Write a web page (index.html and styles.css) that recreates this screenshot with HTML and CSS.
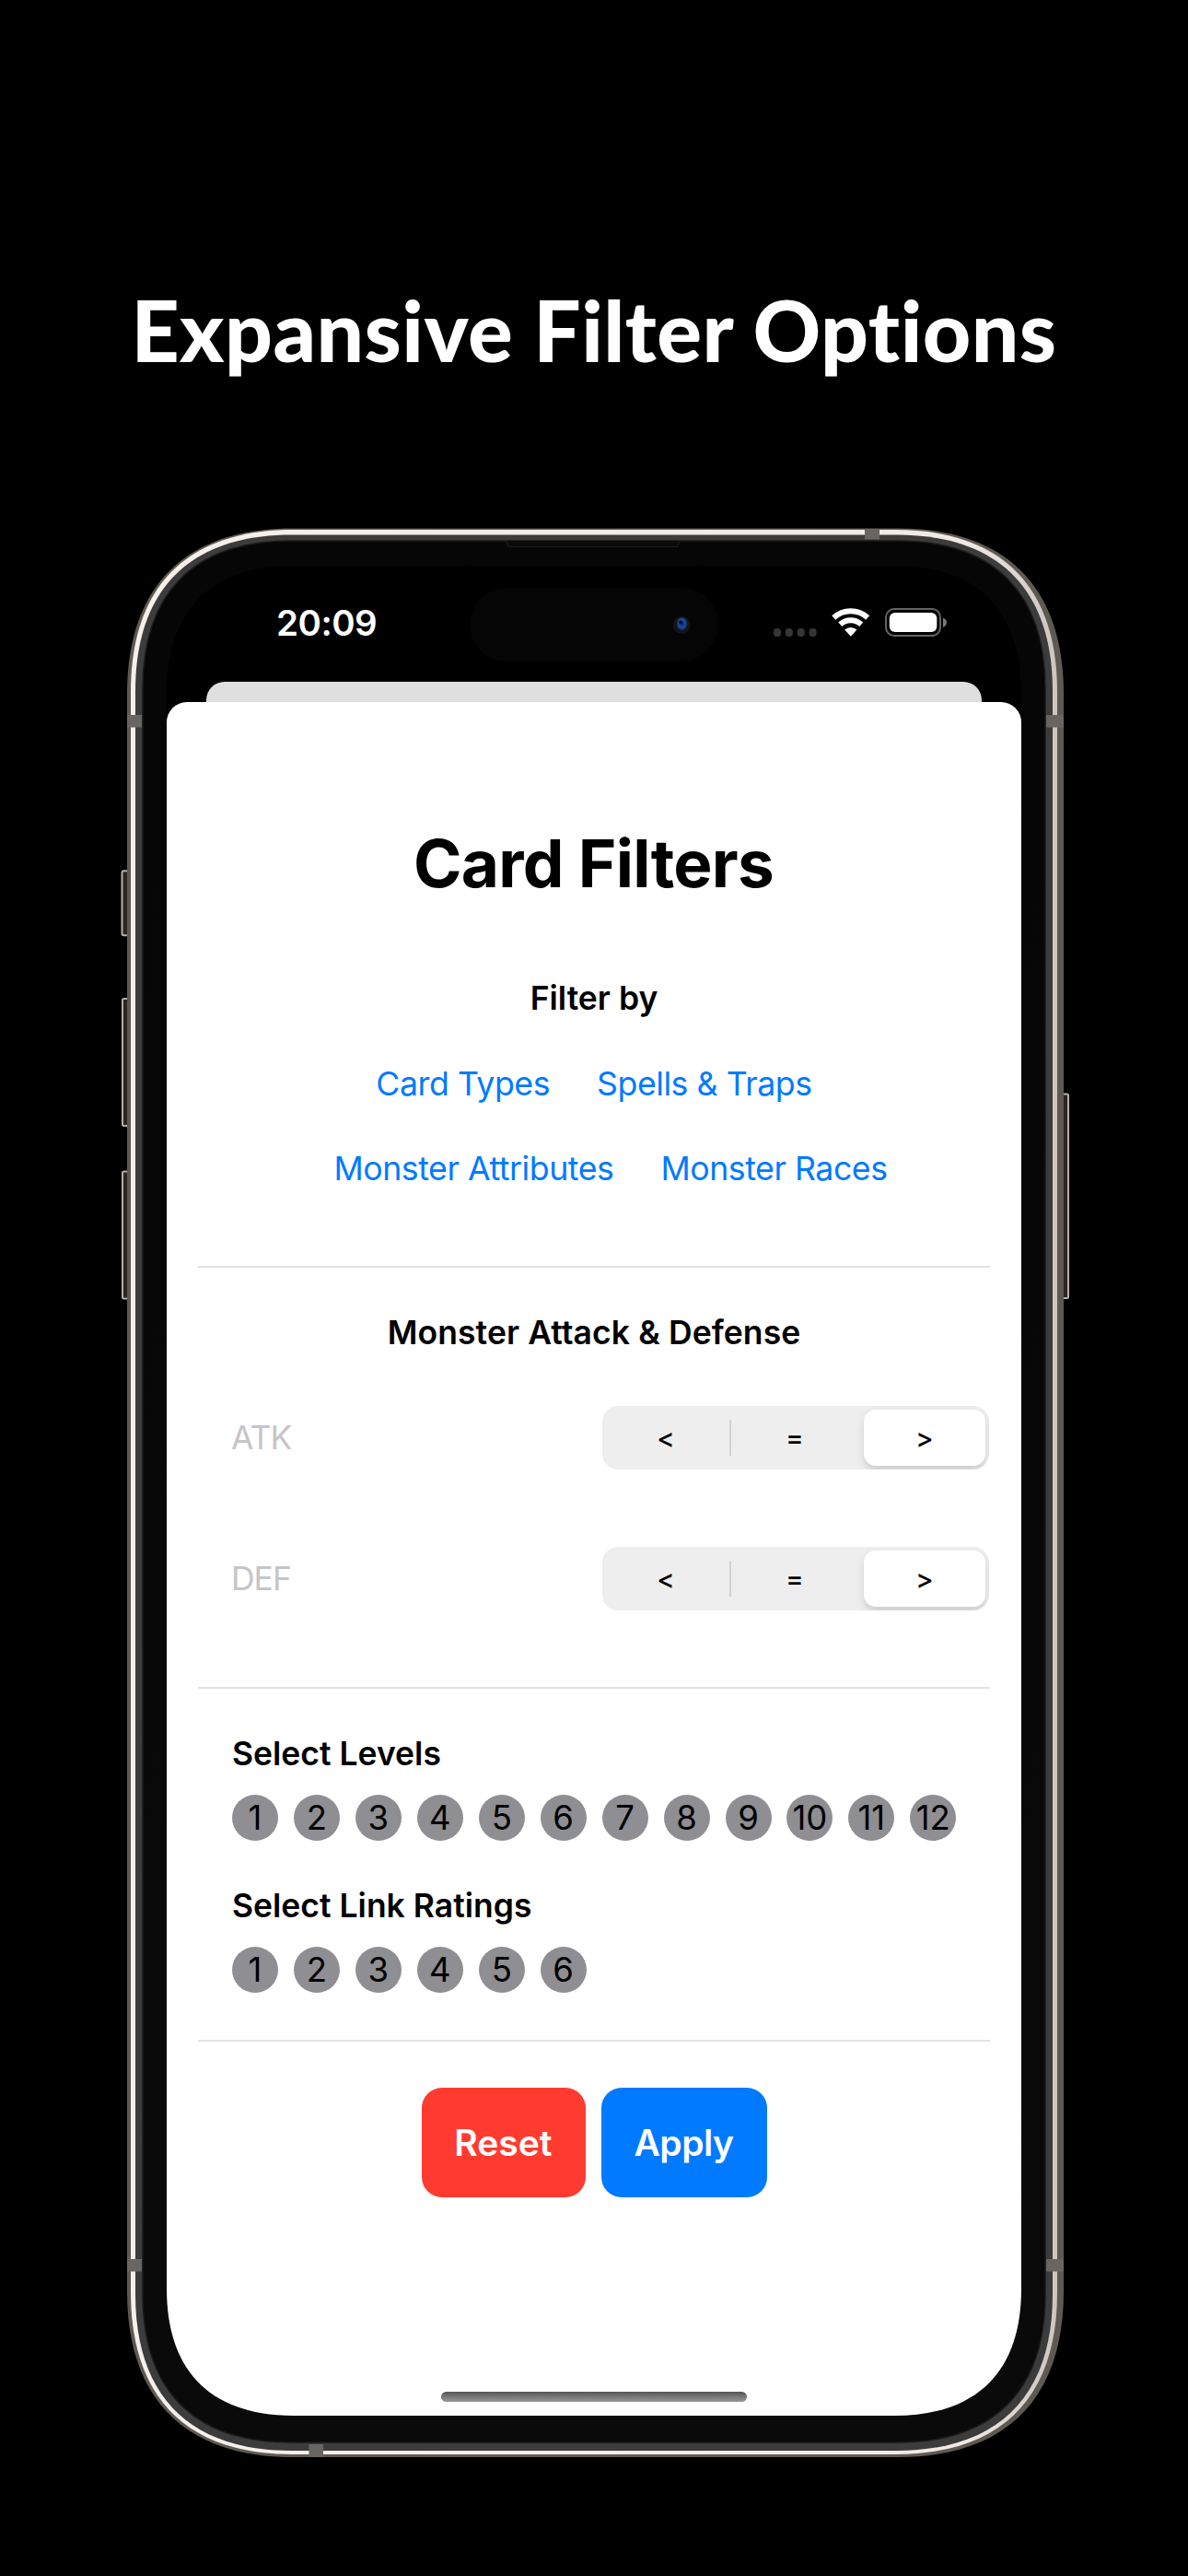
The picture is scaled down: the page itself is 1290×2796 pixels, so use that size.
FILE: index.html
```html
<!DOCTYPE html>
<html lang="en">
<head>
<meta charset="utf-8">
<title>Expansive Filter Options</title>
<link rel="stylesheet" href="styles.css">
</head>
<body>
<main class="page">
  <h1 class="headline">Expansive Filter Options</h1>
  <div class="device">
    <svg class="frame" viewBox="131 573 1031 2095" aria-hidden="true">
      <defs>
        <linearGradient id="shine" x1="0" x2="1" y1="0" y2="0">
          <stop offset="0" stop-color="#f6efeb"/>
          <stop offset=".9" stop-color="#f0e9e5"/>
          <stop offset="1" stop-color="#cdc5c0"/>
        </linearGradient>
        <linearGradient id="glass" x1="0" x2="0" y1="0" y2="1">
          <stop offset="0" stop-color="#060606"/>
          <stop offset="1" stop-color="#0a0a0a"/>
        </linearGradient>
      </defs>
      <g fill="#2c2523" stroke="#b5aea9" stroke-width="2">
        <rect x="132.500" y="945.300" width="10" height="70" rx="2"/>
        <rect x="133" y="1084" width="10" height="138" rx="1.500"/>
        <rect x="133" y="1271.500" width="10" height="138" rx="1.500"/>
        <rect x="1150" y="1187.500" width="10" height="221.500" rx="1.500"/>
      </g>
      <path fill="#5e5a52" d="M318 573.5H975c117 0 180 63 180 180V2487c0 117-63 180-180 180H318c-117 0-180-63-180-180V753.500c0-117 63-180 180-180z"/>
      <path fill="url(#shine)" d="M318 575H972c115 0 176 61 176 176V2488c0 115-61 176-176 176H318c-115 0-176-61-176-176V751c0-115 61-176 176-176z"/>
      <path fill="#3c3c3c" d="M317 580.5H973c111 0 170 59 170 170V2490c0 111-59 170-170 170H317c-111 0-170-59-170-170V750.500c0-111 59-170 170-170z"/>
      <path fill="url(#glass)" stroke="#1a1a1a" stroke-width="1.500" d="M316 587H974c105 0 161 56 161 161V2490c0 105-56 161-161 161H316c-105 0-161-56-161-161V748c0-105 56-161 161-161z"/>
      <g fill="#686562">
        <rect x="138" y="776" width="16" height="13.500"/>
        <rect x="1136" y="776" width="19" height="13.500"/>
        <rect x="138" y="2452" width="16" height="13.500"/>
        <rect x="1136" y="2452" width="19" height="13.500"/>
        <rect x="939" y="574" width="16" height="11.500"/>
        <rect x="335.500" y="2653" width="15.500" height="14"/>
      </g>
      <path fill="#0a0a0a" stroke="#1e1e1e" d="M549.5 587l2.500 6.500H735.500l2.500-6.500"/>
    </svg>
    <div class="screen">
      <div class="status">
        <span class="time">20:09</span>
        <div class="island">
          <svg class="camera" viewBox="0 0 20 20" aria-hidden="true">
            <defs>
              <radialGradient id="lens" cx=".5" cy=".45" r=".55">
                <stop offset="0" stop-color="#1a1550"/>
                <stop offset=".3" stop-color="#1d3a86"/>
                <stop offset=".6" stop-color="#1a4a9c"/>
                <stop offset="1" stop-color="#0b1228"/>
              </radialGradient>
            </defs>
            <circle cx="10" cy="10.500" r="9.500" fill="#141414"/>
            <ellipse cx="10.500" cy="9.500" rx="6" ry="7.500" fill="url(#lens)"/>
            <ellipse cx="9" cy="7.500" rx="1.800" ry="2" fill="#0a0a2c"/>
          </svg>
        </div>
        <svg class="icons" viewBox="838 663 192 34" aria-hidden="true">
          <g fill="#363636">
            <rect x="840" y="686" width="8" height="9" rx="3.500"/>
            <rect x="852.800" y="686" width="8" height="9" rx="3.500"/>
            <rect x="865.700" y="686" width="8" height="9" rx="3.500"/>
            <rect x="878.600" y="686" width="8" height="9" rx="3.500"/>
          </g>
          <g fill="none" stroke="#fff" stroke-width="6">
            <path d="M905.300 674.500a27 27 0 0 1 36.900 0"/>
            <path d="M912.300 681.800a17 17 0 0 1 22.900 0"/>
          </g>
          <path fill="#fff" d="M923.800 694.800l-6.600-7.200a9.500 9.500 0 0 1 13.200 0z"/>
          <rect x="962" y="665" width="59" height="29" rx="9" fill="none" stroke="#646464" stroke-width="2"/>
          <rect x="965.800" y="669" width="51.500" height="21" rx="6" fill="#fff"/>
          <path fill="#777" d="M1024 674.500c2.600 1 4 3 4 5.200s-1.400 4.200-4 5.200z"/>
        </svg>
      </div>
      <div class="backsheet"></div>
      <section class="sheet">
        <h2 class="title">Card Filters</h2>
        <h3 class="heading">Filter by</h3>
        <nav class="links"><a>Card Types</a><a>Spells &amp; Traps</a></nav>
        <nav class="links links-wide"><a>Monster Attributes</a><a>Monster Races</a></nav>
        <hr class="rule">
        <h3 class="heading heading-stats">Monster Attack &amp; Defense</h3>
        <div class="stat">
          <span class="field">ATK</span>
          <div class="segments"><span class="seg">&lt;</span><span class="seg seg-mid">=</span><span class="seg seg-on">&gt;</span></div>
        </div>
        <div class="stat">
          <span class="field">DEF</span>
          <div class="segments"><span class="seg">&lt;</span><span class="seg seg-mid">=</span><span class="seg seg-on">&gt;</span></div>
        </div>
        <hr class="rule rule-stats">
        <h3 class="label">Select Levels</h3>
        <div class="dots"><span class="dot">1</span><span class="dot">2</span><span class="dot">3</span><span class="dot">4</span><span class="dot">5</span><span class="dot">6</span><span class="dot">7</span><span class="dot">8</span><span class="dot">9</span><span class="dot">10</span><span class="dot">11</span><span class="dot">12</span></div>
        <h3 class="label">Select Link Ratings</h3>
        <div class="dots"><span class="dot">1</span><span class="dot">2</span><span class="dot">3</span><span class="dot">4</span><span class="dot">5</span><span class="dot">6</span></div>
        <hr class="rule">
        <div class="actions"><span class="btn btn-reset">Reset</span><span class="btn btn-apply">Apply</span></div>
        <div class="home"></div>
      </section>
    </div>
  </div>
</main>
</body>
</html>
```
FILE: styles.css
```css
* { box-sizing: border-box; }
body { margin: 0; background: #000; font-family: Inter, "Liberation Sans", sans-serif; }
h1, h2, h3, hr { margin: 0; }
.page { width: 1290px; height: 2796px; padding-top: 308px; background: #000; overflow: hidden; }
.headline { height: 100px; text-align: center; color: #fff; font: 900 91px/100px Lato, sans-serif; letter-spacing: .47px; white-space: nowrap; }
.device { position: relative; width: 1031px; height: 2095px; margin: 165px 0 0 131px; padding: 41px 0 0 50px; }
.frame { position: absolute; left: 0; top: 0; width: 1031px; height: 2095px; }
.screen { position: relative; display: flex; flex-direction: column; width: 928px; height: 2008px; background: #000; clip-path: path("M138 0H790c90 0 138 48 138 138V1870c0 90-48 138-138 138H138c-90 0-138-48-138-138V138c0-90 48-138 138-138z"); }

.status { display: flex; align-items: center; height: 126px; }
.time { width: 112px; margin: -2px 0 0 119px; color: #fff; font-size: 38.5px; font-weight: 600; letter-spacing: -.5px; line-height: 46px; }
.island { display: flex; align-items: center; justify-content: flex-end; width: 270px; height: 80px; margin: 2px 0 0 98px; padding-right: 30px; border-radius: 40px; background: #050505; }
.camera { width: 20px; height: 20px; }
.icons { width: 192px; height: 34px; margin: -2px 0 0 58px; }

.backsheet { height: 22px; margin: 0 43px; border-radius: 20px 20px 0 0; background: #dfdfdf; }
.sheet { display: flex; flex-direction: column; flex: 1; padding: 135px 34px 0; border-radius: 22px 22px 0 0; background: #fff; color: #000; }
.title { margin-right: 1px; text-align: center; font-size: 71px; font-weight: 700; letter-spacing: -.75px; line-height: 80px; }
.heading { margin-top: 85px; text-align: center; font-size: 35.5px; font-weight: 600; line-height: 44px; }
.links { display: flex; justify-content: center; gap: 51px; margin-top: 48px; color: #007aff; font-size: 35.7px; letter-spacing: -.45px; line-height: 44px; }
.links-wide { padding-left: 36px; }
.rule { flex: none; height: 2px; margin-top: 84px; border: 0; background: #e2e2e2; }
.heading-stats { margin-top: 49px; letter-spacing: .1px; }
.stat { display: flex; align-items: center; justify-content: space-between; height: 69px; margin-top: 57px; padding: 0 1px 0 36px; }
.stat + .stat { margin-top: 84px; }
.field { color: #c5c5c7; font-size: 35.5px; letter-spacing: -1px; }
.segments { display: grid; grid-template-columns: 138px 146px 132px; width: 420px; height: 69px; padding: 4px 4px 4px 0; border-radius: 17px; background: #eee; overflow: hidden; }
.seg { display: flex; align-items: center; justify-content: center; font-size: 29px; font-weight: 450; line-height: 34px; }
.seg-mid { padding-right: 4px; background: linear-gradient(#d2d2d3, #d2d2d3) 0 50% / 2px 39px no-repeat; }
.seg-on { border-radius: 13px; background: #fff; box-shadow: 0 5px 12px rgba(0, 0, 0, .1), 0 4px 2px rgba(0, 0, 0, .04); font-weight: 500; }
.rule-stats { margin-top: 83px; }
.label { margin: 49px 0 0 37px; font-size: 35.5px; font-weight: 600; line-height: 44px; }
.dots { display: flex; gap: 16.94px; margin: 22px 0 0 37px; }
.dot { display: flex; align-items: center; justify-content: center; width: 50px; height: 50px; border-radius: 50%; background: #8e8e93; font-size: 36.5px; line-height: 50px; }
.dots + .rule { margin-top: 51px; }
.actions { display: flex; justify-content: center; gap: 17px; margin-top: 50px; }
.btn { width: 178px; height: 119px; border-radius: 22px; color: #fff; text-align: center; font-size: 39px; font-weight: 600; line-height: 119px; }
.btn-reset { background: #ff3b30; }
.btn-apply { width: 180px; background: #007aff; letter-spacing: -.5px; }
.home { width: 332px; height: 11px; margin: auto auto 15px; border-radius: 6px; background: linear-gradient(#555, #999); }
```
